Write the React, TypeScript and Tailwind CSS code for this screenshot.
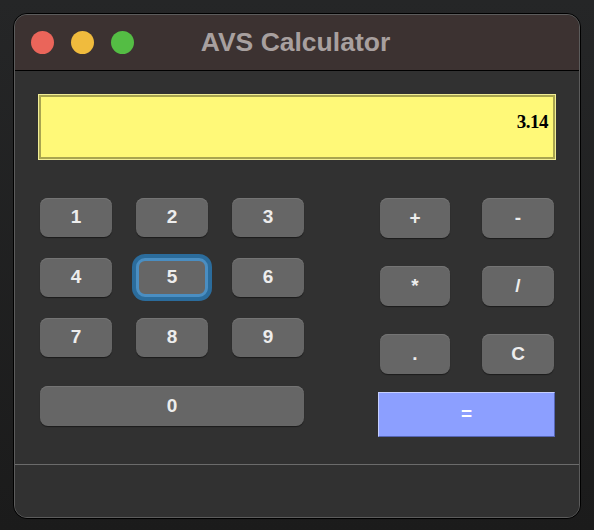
import React from "react";

const sans = { fontFamily: '"Liberation Sans", Arial, sans-serif' };

function Key({ label, w = "w-[72px]", h = "h-[39px]", focused = false }: { label: string; w?: string; h?: string; focused?: boolean }) {
  if (focused) {
    return (
      <div className={`${w} ${h} rounded-[9px] bg-[#666666] border-[3px] border-[#4a8ec2] shadow-[0_0_0_4px_#2b6c9c] flex items-center justify-center text-[19px] font-bold text-[#ededed]`}>
        {label}
      </div>
    );
  }
  return (
    <div className={`${w} ${h} rounded-[8px] bg-[#666666] shadow-[inset_0_1px_0_#747474,0_1px_1px_rgba(0,0,0,0.45)] flex items-center justify-center text-[19px] font-bold text-[#ededed]`}>
      {label}
    </div>
  );
}

export default function App() {
  return (
    <div className="w-[594px] h-[530px] bg-gradient-to-b from-[#252627] to-[#1b1b1b] pt-[13px] pl-[13px]" style={sans}>
      <div className="w-[568px] h-[506px] rounded-[14px] border border-black">
        <div className="w-full h-full rounded-[13px] border border-[#5c5c5c] overflow-hidden flex flex-col bg-[#313131]">
          <div className="h-[55px] bg-[#3c3231] grid grid-cols-[1fr_auto_1fr] items-center">
            <div className="flex items-center gap-[17px] pl-[16px]">
              <div className="w-[23px] h-[23px] rounded-full bg-[#ea655a]" />
              <div className="w-[23px] h-[23px] rounded-full bg-[#f0bb3d]" />
              <div className="w-[23px] h-[23px] rounded-full bg-[#54bd44]" />
            </div>
            <div className="text-[26.5px] font-bold text-[#a8a09f] leading-none pr-[3px]">AVS Calculator</div>
            <div />
          </div>
          <div className="h-[1px] bg-black" />
          <div className="h-[393px] px-[23px] pt-[23px]">
            <div className="h-[66px] w-[518px] border border-[#f2ee95]">
              <div className="h-full w-full bg-[#fff978] border-2 border-[#a9a54f] flex items-center justify-end pr-[5px] pb-[10px]">
                <span className="text-[19px] font-bold text-black tracking-[-0.5px]" style={{ fontFamily: '"Liberation Serif", "Times New Roman", serif' }}>3.14</span>
              </div>
            </div>
            <div className="mt-[38px] flex">
              <div className="ml-[2px] w-[264px] flex flex-col">
                <div className="grid grid-cols-[72px_72px_72px] gap-x-[24px] gap-y-[21px]">
                  <Key label="1" />
                  <Key label="2" />
                  <Key label="3" />
                  <Key label="4" />
                  <Key label="5" focused />
                  <Key label="6" />
                  <Key label="7" />
                  <Key label="8" />
                  <Key label="9" />
                </div>
                <div className="mt-[29px]">
                  <Key label="0" w="w-[264px]" h="h-[40px]" />
                </div>
              </div>
              <div className="ml-[74px] w-[177px] flex flex-col">
                <div className="pl-[2px] grid grid-cols-[70px_72px] gap-x-[32px] gap-y-[28px]">
                  <Key label="+" w="w-[70px]" h="h-[40px]" />
                  <Key label="-" w="w-[72px]" h="h-[40px]" />
                  <Key label="*" w="w-[70px]" h="h-[40px]" />
                  <Key label="/" w="w-[72px]" h="h-[40px]" />
                  <Key label="." w="w-[70px]" h="h-[40px]" />
                  <Key label="C" w="w-[72px]" h="h-[40px]" />
                </div>
                <div className="mt-[18px] h-[45px] w-[177px] bg-[#8c9fff] border border-t-[#c6cfff] border-l-[#c6cfff] border-r-[#5565b5] border-b-[#5565b5] flex items-center justify-center text-[19px] font-bold text-white">
                  =
                </div>
              </div>
            </div>
          </div>
          <div className="h-[1px] bg-[#6b6b6b]" />
          <div className="flex-1 bg-[#313131]" />
        </div>
      </div>
    </div>
  );
}
